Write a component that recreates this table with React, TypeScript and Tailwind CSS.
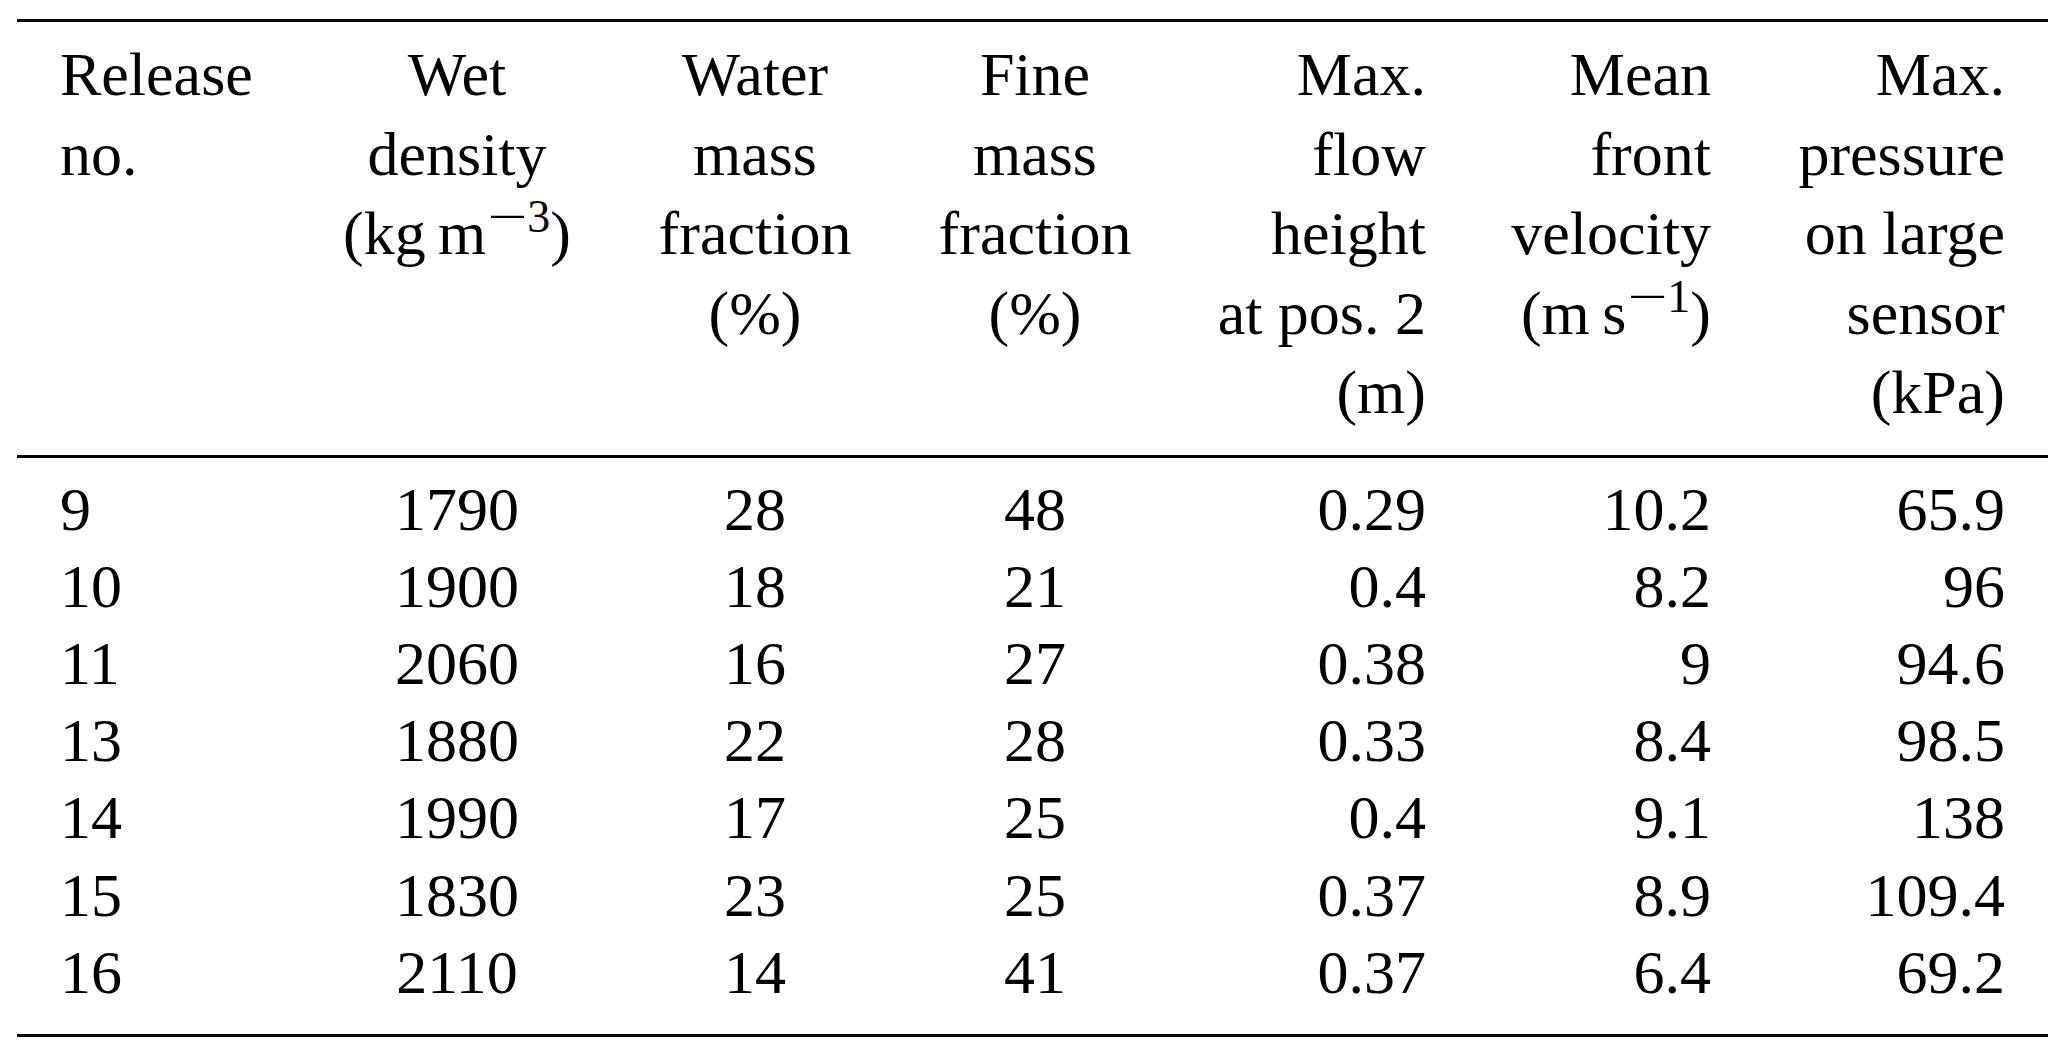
import React from "react";

const rows: string[][] = [
  ["9", "1790", "28", "48", "0.29", "10.2", "65.9"],
  ["10", "1900", "18", "21", "0.4", "8.2", "96"],
  ["11", "2060", "16", "27", "0.38", "9", "94.6"],
  ["13", "1880", "22", "28", "0.33", "8.4", "98.5"],
  ["14", "1990", "17", "25", "0.4", "9.1", "138"],
  ["15", "1830", "23", "25", "0.37", "8.9", "109.4"],
  ["16", "2110", "14", "41", "0.37", "6.4", "69.2"],
];

const align = [
  "text-left",
  "text-center",
  "text-center",
  "text-center",
  "text-right",
  "text-right",
  "text-right",
];

function Sup({ n }: { n: string }) {
  return (
    <span className="text-[46px] leading-none align-[22px]">
      <span className="inline-block scale-x-[1.55] ml-[9px] mr-[6px]">−</span>
      {n}
    </span>
  );
}

export default function App() {
  const headers: React.ReactNode[] = [
    <>
      Release
      <br />
      no.
    </>,
    <>
      Wet
      <br />
      density
      <br />
      (kg&#8201;m
      <Sup n="3" />)
    </>,
    <>
      Water
      <br />
      mass
      <br />
      fraction
      <br />
      (%)
    </>,
    <>
      Fine
      <br />
      mass
      <br />
      fraction
      <br />
      (%)
    </>,
    <>
      Max.
      <br />
      flow
      <br />
      height
      <br />
      at pos. 2
      <br />
      (m)
    </>,
    <>
      Mean
      <br />
      front
      <br />
      velocity
      <br />
      (m&#8201;s
      <Sup n="1" />)
    </>,
    <>
      Max.
      <br />
      pressure
      <br />
      on large
      <br />
      sensor
      <br />
      (kPa)
    </>,
  ];

  return (
    <div className="w-[2067px] h-[1057px] bg-white pt-[19px] pl-[17px] pr-[19px] text-black font-['Liberation_Serif','Times_New_Roman',serif] text-[62px]">
      <div className="h-[3px] bg-black" />
      <div className="grid grid-cols-[252px_290px_306px_254px_264px_285px_294px] px-[43px] pt-[13px] pb-[22px] leading-[79.5px] items-start">
        {headers.map((h, i) => (
          <div key={i} className={`${align[i]} whitespace-nowrap`}>
            {h}
          </div>
        ))}
      </div>
      <div className="h-[3px] bg-black" />
      <div className="grid grid-cols-[252px_290px_306px_254px_264px_285px_294px] px-[43px] pt-[13px] pb-[23px] leading-[77.2px]">
        {rows.map((r, ri) =>
          r.map((c, ci) => (
            <div key={`${ri}-${ci}`} className={`${align[ci]} whitespace-nowrap`}>
              {c}
            </div>
          ))
        )}
      </div>
      <div className="h-[3px] bg-black" />
    </div>
  );
}
